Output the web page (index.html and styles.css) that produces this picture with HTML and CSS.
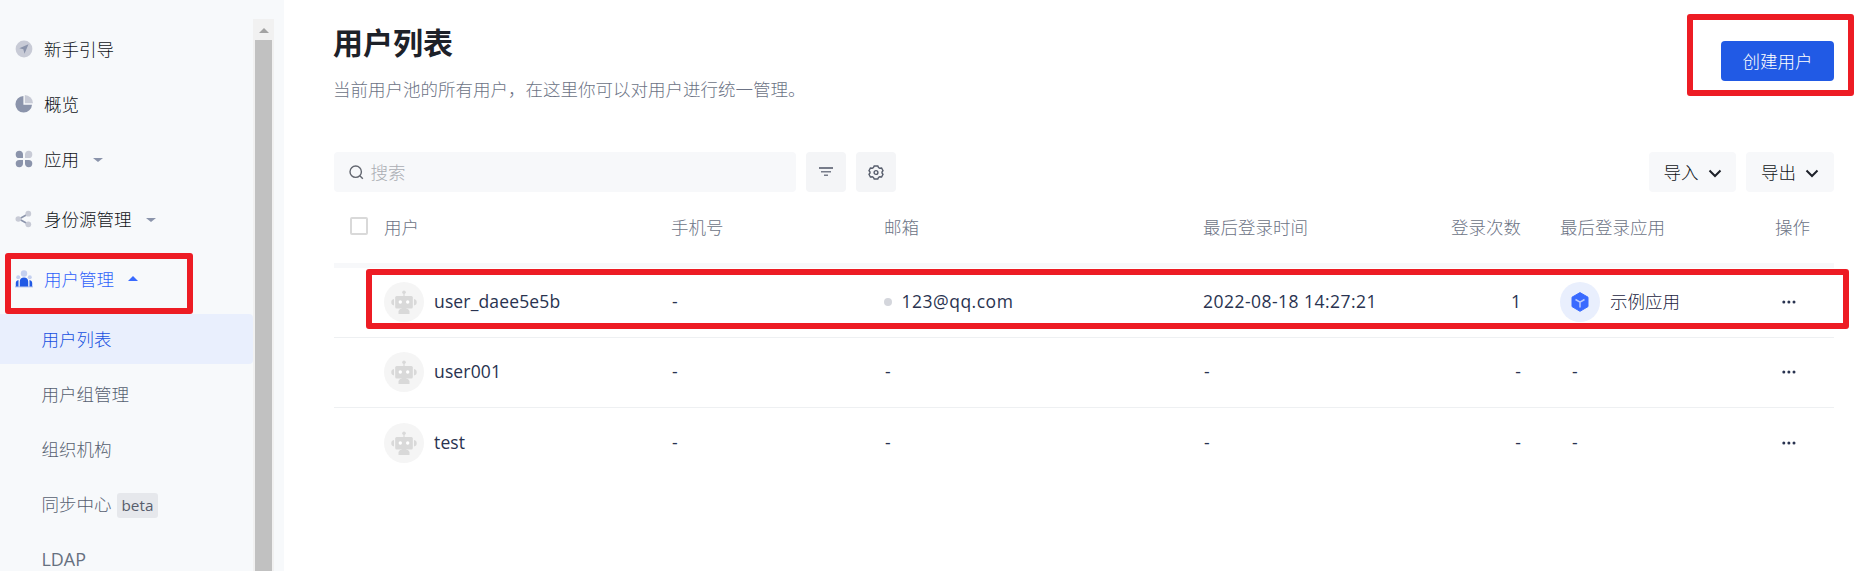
FILE: index.html
```html
<!DOCTYPE html>
<html lang="zh-CN">
<head>
<meta charset="utf-8">
<title>用户列表</title>
<link rel="stylesheet" href="styles.css">
</head>
<body>
<svg class="defs" width="0" height="0">
  <symbol id="robot" viewBox="0 0 40 40"><g fill="#d9d9d9"><circle cx="20" cy="10.3" r="1.8"/><rect x="19.4" y="11" width="1.2" height="4"/><path d="M10 17v6.500a3.300 3.300 0 0 1 0-6.500zM30 17v6.500a3.300 3.300 0 0 0 0-6.500z"/><rect x="11.200" y="14" width="17.600" height="12.500" rx="1.500"/><rect x="17.500" y="26" width="5" height="2"/><path d="M16 27h8l1.500 2v3h-11v-3z"/></g><circle cx="16.300" cy="20" r="1.700" fill="#fff"/><circle cx="23.700" cy="20" r="1.700" fill="#fff"/></symbol>
  <symbol id="dots" viewBox="0 0 14 4"><circle cx="1.800" cy="2" r="1.500"/><circle cx="6.900" cy="2" r="1.500"/><circle cx="12" cy="2" r="1.500"/></symbol>
  <symbol id="chev" viewBox="0 0 14 10"><path d="M1.500 2.500 7 8l5.500-5.500" fill="none" stroke="#1d2129" stroke-width="2"/></symbol>
</svg>
<div class="app">
  <aside class="sidebar">
    <nav class="menu">
      <a class="item"><svg class="ico" viewBox="0 0 18 18"><circle cx="9" cy="9" r="8.400" fill="#c8cbd6"/><path d="M13.500 4.300 4.300 8.300l4 1 1.200 4.500z" fill="#8b94ab"/></svg>新手引导</a>
      <a class="item"><svg class="ico" viewBox="0 0 18 18"><path d="M8.400 1A8.300 8.300 0 1 0 17 9.700H8.400z" fill="#8b94ab"/><path d="M9.800 0A8.300 8.300 0 0 1 18 8.300H9.800z" fill="#c8cbd6"/></svg>概览</a>
      <a class="item"><svg class="ico" viewBox="0 0 18 18"><g fill="#8b94ab"><path d="M4.300.8a3.600 3.600 0 0 1 3.700 3.700V8H4.300a3.600 3.600 0 0 1 0-7.200z"/><path d="M4.300 17.200A3.600 3.600 0 0 0 8 13.500V10H4.300a3.600 3.600 0 0 0 0 7.200zM13.700 17.200a3.600 3.600 0 0 1-3.700-3.700V10h3.700a3.600 3.600 0 0 1 0 7.200z"/></g><path d="M13.700.8A3.600 3.600 0 0 0 10 4.500V8h3.700a3.600 3.600 0 0 0 0-7.200z" fill="#c8cbd6"/></svg>应用<i class="caret"></i></a>
      <a class="item tall"><svg class="ico" viewBox="0 0 18 18"><path d="M13 4 4 9l9 5" fill="none" stroke="#8b94ab" stroke-width="1.600"/><g fill="#c8cbd6"><circle cx="3.300" cy="9" r="2.800"/><circle cx="13.300" cy="3.700" r="2.900"/><circle cx="13.300" cy="14.300" r="2.900"/></g></svg>身份源管理<i class="caret"></i></a>
      <a class="item open"><svg class="ico" viewBox="0 0 18 18"><g fill="#c4d0f0"><circle cx="9" cy="3.500" r="3.200"/><circle cx="3.200" cy="7.300" r="2"/><circle cx="14.800" cy="7.300" r="2"/><rect y="16" width="18" height="1.500"/></g><g fill="#215ae5"><path d="M4.800 16.500v-5C4.800 9 6.500 7.500 9 7.500s4.200 1.500 4.200 4v5zM.8 16.500v-3.500c0-1.500 1-2.700 2.700-3v6.500zM17.200 16.500v-3.500c0-1.500-1-2.700-2.700-3v6.500z"/></g></svg>用户管理<i class="caret up"></i></a>
      <a class="sub active">用户列表</a>
      <a class="sub">用户组管理</a>
      <a class="sub">组织机构</a>
      <a class="sub">同步中心<span class="tag">beta</span></a>
      <a class="sub latin">LDAP</a>
    </nav>
    <div class="scroll"><div class="arrow"></div><div class="thumb"></div></div>
  </aside>
  <main class="main">
    <header class="head">
      <div>
        <h1>用户列表</h1>
        <p>当前用户池的所有用户，在这里你可以对用户进行统一管理。</p>
      </div>
      <button class="create">创建用户</button>
    </header>
    <div class="tools">
      <div class="search"><svg width="15" height="15" viewBox="0 0 15 15" fill="none" stroke="#62666f" stroke-width="1.400"><circle cx="6.700" cy="6.700" r="5.700"/><path d="m10.800 10.800 3 3"/></svg><span>搜索</span></div>
      <button class="sq"><svg width="14" height="10" viewBox="0 0 14 10" fill="#777c8a"><path d="M0 0h14v2H0zM2 4h10v1.500H2zM5 7.500h4V9H5z"/></svg></button>
      <button class="sq"><svg width="16" height="15" viewBox="0 0 16 15" fill="none" stroke="#575d6c" stroke-width="1.400"><path d="M6.200 1h3.600l.7 1.600 1.200.6 1.900-.2 1.400 2.600-1 1.400v1l1 1.400-1.400 2.600-1.900-.2-1.200.6L9.800 14H6.200l-.7-1.600-1.200-.6-1.900.2L1 9.400 2 8V7L1 5.600 2.400 3l1.900.2 1.200-.6z"/><circle cx="8" cy="7.500" r="1.900"/></svg></button>
      <span class="space"></span>
      <button class="drop in">导入<svg width="14" height="10"><use href="#chev"/></svg></button>
      <button class="drop">导出<svg width="14" height="10"><use href="#chev"/></svg></button>
    </div>
    <section class="table">
      <div class="row th"><i class="check"></i><span>用户</span><span>手机号</span><span>邮箱</span><span>最后登录时间</span><span class="num">登录次数</span><span class="appcol">最后登录应用</span><span>操作</span></div>
      <div class="row"><i></i><span class="user"><svg class="avatar"><use href="#robot"/></svg><span>user_daee5e5b</span></span><span class="dash">-</span><span class="mail"><i class="dot"></i><span>123@qq.com</span></span><span class="time">2022-08-18 14:27:21</span><span class="num">1</span><span class="user cjk appcol"><svg class="avatar blue" viewBox="0 0 40 40"><path d="m20 10.600 8 4.600v9.400l-8 4.700-8-4.700v-9.400z" fill="#396aff" stroke="#396aff" stroke-linejoin="round"/><path d="m15.500 17.500 4.500 2.600 4.500-2.600M20 20v5.500" stroke="#b9caff" stroke-width="1.500" fill="none"/></svg><span>示例应用</span></span><svg class="more"><use href="#dots"/></svg></div>
      <div class="row"><i></i><span class="user"><svg class="avatar"><use href="#robot"/></svg><span>user001</span></span><span class="dash">-</span><span class="dash">-</span><span class="dash">-</span><span class="num">-</span><span class="none">-</span><svg class="more"><use href="#dots"/></svg></div>
      <div class="row last"><i></i><span class="user"><svg class="avatar"><use href="#robot"/></svg><span>test</span></span><span class="dash">-</span><span class="dash">-</span><span class="dash">-</span><span class="num">-</span><span class="none">-</span><svg class="more"><use href="#dots"/></svg></div>
    </section>
  </main>
  <div class="mark mark-menu"></div>
  <div class="mark mark-row"></div>
  <div class="mark mark-create"></div>
</div>
</body>
</html>
```
FILE: styles.css
```css
* { box-sizing: border-box; }
body { margin: 0; font: 300 17.5px/28px "Open Sans", "Noto Sans CJK SC", sans-serif; color: #101318; background: #fff; }
.defs { position: absolute; }
.app { position: relative; display: flex; width: 1868px; height: 571px; overflow: hidden; }
.sidebar { width: 284px; background: #f7f9fb; display: flex; }
.menu { width: 253px; padding-top: 21px; }
.item { display: flex; align-items: center; height: 55px; padding-left: 15px; }
.item.tall { height: 65px; }
.item.open { color: #2f62fa; }
.ico { width: 18px; height: 18px; margin-right: 11px; }
.caret { margin: 2px 0 0 14px; border: 5px solid transparent; border-top: 4px solid #8b94ab; border-bottom: 0; }
.caret.up { margin-top: 0; border-top: 0; border-bottom: 5px solid #396aff; }
.sub { display: flex; align-items: center; height: 50px; margin-bottom: 5px; padding-left: 41.500px; color: #566070; border-radius: 0 4px 4px 0; }
.sub.active { background: #e9effd; color: #1650e0; margin-top: 8px; }
.sub.latin { font-weight: 400; height: 49px; color: #667080; font-size: 17.900px; }
.tag { margin: 2px 0 0 5px; padding: 0 5px; height: 25px; line-height: 24px; font-size: 15.300px; font-weight: 400; color: #575d6c; background: #e6e8ec; border-radius: 3px; }
.scroll { width: 21px; margin-top: 19px; background: #f1f1f1; }
.arrow { width: 0; margin: 9px auto 7px; border: 5px solid transparent; border-top: 0; border-bottom-color: #a3a3a3; }
.thumb { width: 17px; height: 540px; margin: 0 auto; background: #c1c1c1; }
.main { flex: 1; padding: 0 34px 0 50px; }
.head { display: flex; justify-content: space-between; height: 152px; }
h1 { margin: 21px 0 10px -1px; font-size: 30px; line-height: 44px; font-weight: 700; color: #1d2129; }
p { margin: 0 0 0 -1px; color: #6c7385; }
button { border: 0; padding: 0; font: inherit; color: inherit; background: #f7f8fa; border-radius: 4px; height: 40px; display: flex; align-items: center; justify-content: center; }
.create { width: 113px; margin-top: 41px; color: #fff; background: #215ae5; }
.tools { display: flex; gap: 10px; }
.search { width: 462px; height: 40px; padding-left: 15px; display: flex; align-items: center; gap: 6.500px; border-radius: 4px; background: #f7f8fa; color: #aaadb3; }
.sq { width: 40px; background: #f4f5f7; }
.space { flex: 1; }
.drop { width: 88px; gap: 9px; }
.drop svg { margin-top: 2px; }
.drop.in { width: 87px; }
.row { display: grid; grid-template-columns: 50px 287px 213px 319px 218px 100px 254px 59px; align-items: center; height: 70px; padding-bottom: 1px; border-bottom: 1px solid #eef0f2; color: #293350; font-weight: 400; }
.appcol { padding-left: 39px; }
.none { padding-left: 51px; }
.th { height: 76px; border-bottom: 5px solid #f7f8fa; color: #6c7385; font-weight: 300; }
.row.last { border: 0; height: 71px; }
.check { width: 18px; height: 18px; margin: -2px 0 0 16px; border: 2px solid #d9d9d9; border-radius: 2px; background: #fff; }
.num { text-align: right; }
.user, .mail { display: flex; align-items: center; gap: 10px; letter-spacing: .15px; }
.user > span { margin-top: -2px; }
.mail { gap: 9.500px; letter-spacing: .5px; }
.time { letter-spacing: .47px; }
.mail, .time, .row:not(.th) .num, .none, .dash { margin-top: -2px; }
.cjk { font-weight: 300; letter-spacing: 0; color: #1a2340; }
.avatar { width: 40px; height: 40px; border-radius: 50%; background: #f5f5f5; }
.avatar.blue { background: #e9effd; }
.dot { width: 8px; height: 8px; margin-top: 2px; border-radius: 50%; background: #d4d6dc; }
.dash { padding-left: 1px; }
.more { width: 14px; height: 4px; margin-left: 7px; fill: #293350; }
.mark { position: absolute; border: 6px solid #ed1c24; border-radius: 3px; }
.mark-menu { left: 5px; top: 253px; width: 188px; height: 61px; }
.mark-row { left: 366px; top: 269px; width: 1483px; height: 60px; }
.mark-create { left: 1687px; top: 14px; width: 167px; height: 82px; }
```
